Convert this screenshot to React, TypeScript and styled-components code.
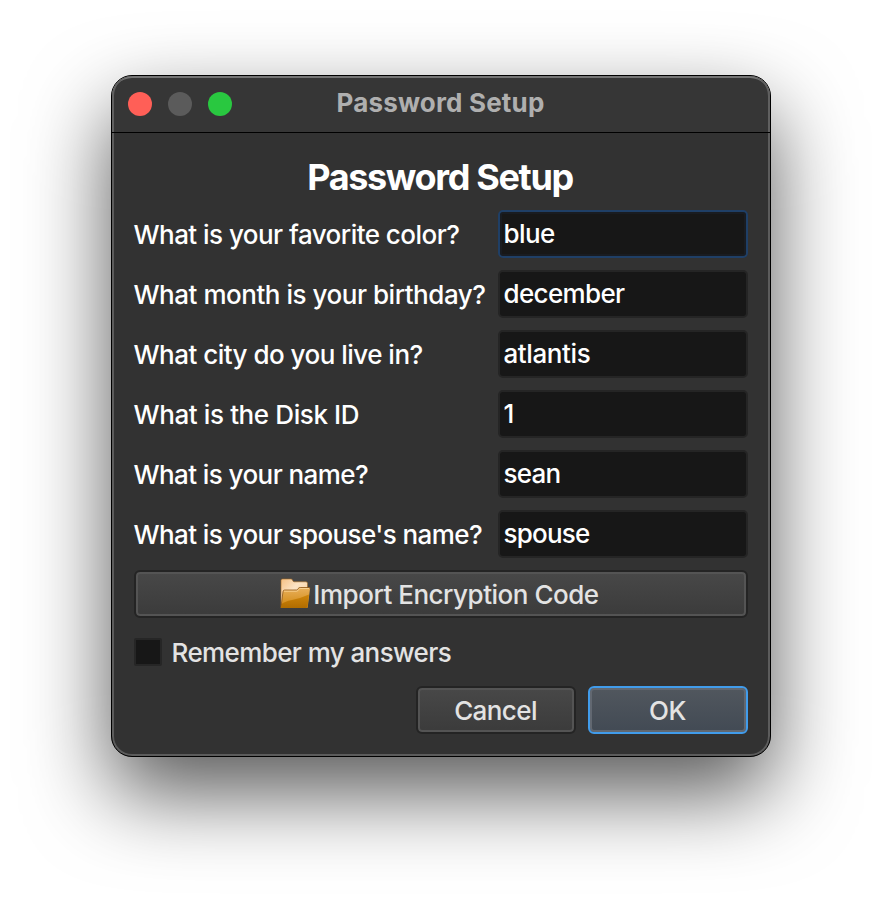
import React from 'react';
import styled, { createGlobalStyle, css } from 'styled-components';

const GlobalStyle = createGlobalStyle`
  * { box-sizing: border-box; }
  body { margin: 0; background: #fff; overflow: hidden; font-family: Inter, "Liberation Sans", sans-serif; }
`;

const Desktop = styled.main`
  width: 882px;
  height: 904px;
  padding: 75px 111px;
  background: #fff;
  overflow: hidden;
`;

const Window = styled.section`
  width: 660px;
  height: 682px;
  border: 1px solid #000;
  border-radius: 21px;
  background: #323232;
  box-shadow: inset 0 0 0 2px #5c5c5c, inset 0 2px 0 #777, 0 36px 84px rgba(0, 0, 0, 0.66);
`;

const TitleBar = styled.header`
  height: 57px;
  display: grid;
  grid-template-columns: 120px 1fr 120px;
  align-items: center;
  padding: 0 16px;
  margin: 0;
  border-bottom: 1px solid #000;
  border-radius: 20px 20px 0 0;
  background: #363636;
  box-shadow: inset 2px 0 #606060, inset -2px 0 #606060, inset 0 2px #757575;
`;

const Lights = styled.div`
  display: flex;
  gap: 16px;
`;

const Light = styled.span<{ $color: string }>`
  width: 24px;
  height: 24px;
  border-radius: 50%;
  background: ${(p) => p.$color};
`;

const WindowTitle = styled.div`
  text-align: center;
  white-space: nowrap;
  color: #afafaf;
  font-size: 26px;
  line-height: 32px;
  font-weight: 700;
  letter-spacing: 0.17px;
  padding: 0 1px 2px 0;
`;

const Body = styled.div`
  padding: 20px 22px 0;
`;

const Heading = styled.h1`
  margin: 0;
  height: 57px;
  line-height: 48px;
  text-align: center;
  color: #fff;
  font-size: 36px;
  font-weight: 700;
  letter-spacing: -1.35px;
  padding-right: 2px;
`;

const Form = styled.form`
  display: grid;
  grid-template-columns: 352px 250px;
  column-gap: 12px;
  row-gap: 12px;
`;

const textStyle = css`
  font-family: Inter, "Liberation Sans", sans-serif;
  font-size: 26px;
  font-weight: 450;
`;

const Label = styled.label<{ $spacing: number }>`
  ${textStyle}
  color: #fff;
  line-height: 50px;
  height: 48px;
  margin-left: -0.5px;
  white-space: nowrap;
  letter-spacing: ${(p) => p.$spacing}px;
`;

const Input = styled.input<{ $focused: boolean; $spacing: number }>`
  ${textStyle}
  width: 250px;
  height: 48px;
  padding: 0 3.5px 2px;
  color: #fff;
  background: #171717;
  border: 2px solid ${(p) => (p.$focused ? '#1f3f66' : '#252525')};
  border-radius: 5px;
  box-shadow: ${(p) => (p.$focused ? 'inset 0 0 0 2px #191c21' : 'none')};
  outline: none;
  letter-spacing: ${(p) => p.$spacing}px;
`;

const Button = styled.button<{ $width: number; $primary?: boolean; $spacing: number }>`
  ${textStyle}
  width: ${(p) => p.$width}px;
  height: 48px;
  display: flex;
  align-items: center;
  justify-content: center;
  gap: 2.5px;
  padding: 0 1px 0 0;
  color: #e3e3e3;
  border: 2px solid ${(p) => (p.$primary ? '#419ceb' : '#242424')};
  border-radius: 6px;
  background: ${(p) => (p.$primary ? 'linear-gradient(#51575e, #424a54)' : 'linear-gradient(#484848, #3b3b3b)')};
  box-shadow: inset 0 0 0 2px ${(p) => (p.$primary ? '#626871' : '#545454')};
  letter-spacing: ${(p) => p.$spacing}px;
`;

const ImportButton = styled(Button)`
  padding-right: 4.5px;
`;

const Remember = styled.label`
  ${textStyle}
  display: flex;
  align-items: center;
  gap: 9.5px;
  height: 32px;
  margin-top: 18px;
  color: #e3e3e3;
  letter-spacing: -0.6px;
`;

const CheckBox = styled.span`
  width: 28px;
  height: 28px;
  background: #171717;
  border: 2px solid #262626;
  border-radius: 2px;
`;

const Spacer = styled.div`
  height: 12px;
`;

const Actions = styled.div`
  display: flex;
  justify-content: flex-end;
  gap: 12px;
  margin-top: 18px;
`;

const FolderIcon = () => (
  <svg width="32" height="32" viewBox="0 0 32 32" aria-hidden="true">
    <defs>
      <linearGradient id="back" x1="0" y1="0" x2="1" y2="1">
        <stop offset="0" stopColor="#f5c084" />
        <stop offset=".4" stopColor="#fce3c4" />
        <stop offset="1" stopColor="#f3c98f" />
      </linearGradient>
      <linearGradient id="front" x1="0" y1="0" x2="0" y2="1">
        <stop offset="0" stopColor="#e9b05c" />
        <stop offset="1" stopColor="#cf860c" />
      </linearGradient>
      <linearGradient id="shade" x1="0" y1="0" x2="0" y2="1">
        <stop offset="0" stopColor="#d0860b" />
        <stop offset="1" stopColor="#b06c00" />
      </linearGradient>
    </defs>
    <path d="M2 29.500V2.500q0-1.500 1.500-1.500h8.500q1.200 0 1.500 1.200.4 1.600 1.800 1.600H27q1.500 0 1.500 1.500V29.500z" fill="url(#back)" stroke="#a56a20" strokeWidth=".6" />
    <path d="M1.800 30L4 13.500q.2-1.500 1.700-1.500h11.800q1 0 1.700-1.200l.6-1Q20.200 9.500 21.200 9.500h8.700q1.300 0 1.100 1.300L28.900 28q-.3 2-1.600 2z" fill="url(#front)" />
    <path d="M2.200 26.500Q5 23.500 13 22T30 16.500L28.600 28q-.3 2-1.600 2H1.800z" fill="url(#shade)" />
    <path d="M2.200 27.500L4 13.500q.2-1.500 1.700-1.500h11.800q1 0 1.700-1.200l.6-1Q20.200 9.500 21.200 9.500h8.700q1.300 0 1.100 1.300" fill="none" stroke="#8b5414" strokeWidth=".8" />
    <path d="M5 13.200h12.500q1.500 0 2.500-2 .4-.7 1.200-.7H30.200" fill="none" stroke="#ffe0a8" strokeWidth=".7" />
  </svg>
);

const questions = [
  { label: 'What is your favorite color?', value: 'blue', ls: -0.54, vs: -0.6 },
  { label: 'What month is your birthday?', value: 'december', ls: -0.47, vs: -0.65 },
  { label: 'What city do you live in?', value: 'atlantis', ls: -0.52, vs: -0.4 },
  { label: 'What is the Disk ID', value: '1', ls: -0.39, vs: -0.3 },
  { label: 'What is your name?', value: 'sean', ls: -0.58, vs: -0.75 },
  { label: "What is your spouse's name?", value: 'spouse', ls: -0.58, vs: -0.8 },
];

export default function App() {
  return (
    <Desktop>
      <GlobalStyle />
      <Window>
        <TitleBar>
          <Lights>
            <Light $color="#ff5f57" />
            <Light $color="#5b5b5b" />
            <Light $color="#29c840" />
          </Lights>
          <WindowTitle>Password Setup</WindowTitle>
        </TitleBar>
        <Body>
          <Heading>Password Setup</Heading>
          <Form>
            {questions.map((q, i) => (
              <React.Fragment key={q.label}>
                <Label htmlFor={`answer-${i}`} $spacing={q.ls}>{q.label}</Label>
                <Input id={`answer-${i}`} defaultValue={q.value} $focused={i === 0} $spacing={q.vs} spellCheck={false} />
              </React.Fragment>
            ))}
          </Form>
          <Spacer />
          <ImportButton $width={614} $spacing={-0.48}>
            <FolderIcon />
            <span>Import Encryption Code</span>
          </ImportButton>
          <Remember>
            <CheckBox />
            <span>Remember my answers</span>
          </Remember>
          <Actions>
            <Button $width={160} $spacing={-0.6}>Cancel</Button>
            <Button $width={160} $spacing={-0.45} $primary>OK</Button>
          </Actions>
        </Body>
      </Window>
    </Desktop>
  );
}
